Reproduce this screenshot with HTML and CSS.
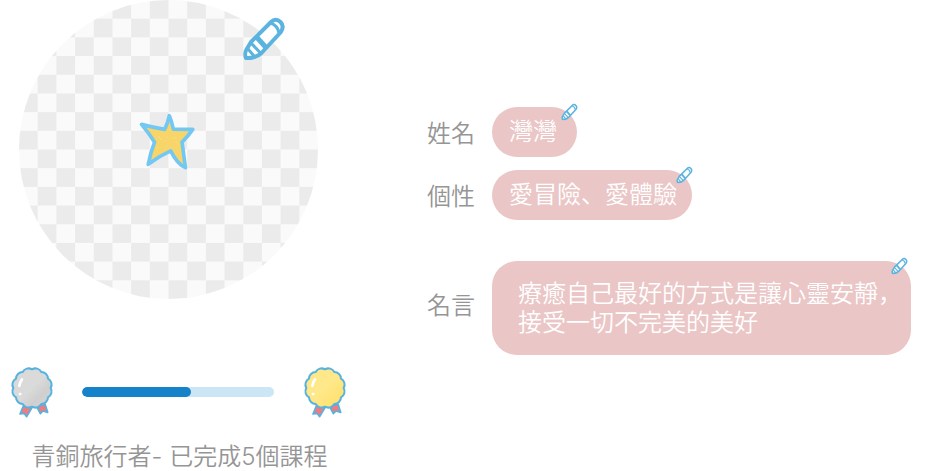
FILE: index.html
```html
<!DOCTYPE html>
<html lang="zh-Hant">
<head>
<meta charset="utf-8">
<title>青銅旅行者</title>
<meta name="viewport" content="width=device-width, initial-scale=1">
<link rel="stylesheet" href="styles.css">
</head>
<body>
<svg class="sprite" aria-hidden="true">
  <defs>
    <linearGradient id="silver" x1="0" y1="0" x2="1" y2="1"><stop offset="0.5" stop-color="#dadada"/><stop offset="0.7" stop-color="#cfcfcf"/><stop offset="1" stop-color="#d4d4d4"/></linearGradient>
    <linearGradient id="gold" x1="0" y1="0" x2="1" y2="1"><stop offset="0.5" stop-color="#ffe88a"/><stop offset="0.8" stop-color="#ffe272"/></linearGradient>
  </defs>
  <symbol id="pencil" viewBox="0 0 44 46">
    <path class="pencil-body" d="M4 42 C3 40 3 36 4.500 33.500 L9 26 L29 6 C32 3 35.500 3 38.500 6 C41.500 9 41 13 38.500 16.500 L19.500 37 C16 40.500 9 42.500 4 42Z"/>
    <path class="pencil-line" d="M28.500 7 C33 8.500 36 11.500 37 17 M9 27 L18.500 37 M6 33 L12 40"/>
    <path class="pencil-band" d="M15 21.500 L24 31.500"/>
  </symbol>
  <symbol id="flower" viewBox="27 18 135 156">
    <path class="ribbon" d="M70 138 L60 162 L72 160 L80 170 L98 140Z M110 140 L121 161 L129 153 L143 157 L135 132Z"/>
    <path class="petals" d="M152 84 A20 20 0 0 1 144 112 A20 20 0 0 1 124 132 A20 20 0 0 1 96 140 A20 20 0 0 1 68 132 A20 20 0 0 1 48 112 A20 20 0 0 1 40 84 A20 20 0 0 1 48 56 A20 20 0 0 1 68 36 A20 20 0 0 1 96 28 A20 20 0 0 1 124 36 A20 20 0 0 1 144 56 A20 20 0 0 1 152 84Z"/>
    <path class="shine" d="M66 58 Q60 66 58 78 M60 102 L61 102"/>
  </symbol>
</svg>

<main class="profile">
  <section class="traveler">
    <div class="avatar">
      <svg class="star" viewBox="25 22 172 176" role="img" aria-label="星星">
        <path class="star-shape" d="M118 33 Q125 50 130 73 L188 74 Q174 94 156 112 L166 188 Q142 178 122 138 Q88 153 55 178 Q62 142 74 112 Q56 84 35 59 Q68 68 104 74 Q113 56 118 33Z"/>
        <path class="star-fleck" d="M86 94 L89 100 M91 105 L96 102 M101 109 L105 105 M110 96 L113 99 M131 100 L136 98 M80 130 L84 128 M108 125 L110 122 M140 113 L142 116"/>
      </svg>
      <button class="edit edit-avatar" type="button" aria-label="編輯頭像"><svg><use href="#pencil"/></svg></button>
    </div>
    <div class="level">
      <svg class="badge badge-silver" aria-hidden="true"><use href="#flower"/></svg>
      <progress class="bar" value="57" max="100" aria-label="課程進度"></progress>
      <svg class="badge badge-gold" aria-hidden="true"><use href="#flower"/></svg>
    </div>
    <p class="rank">青銅旅行者- 已完成5個課程</p>
  </section>

  <dl class="details">
    <div class="row">
      <dt>姓名</dt>
      <dd class="chip">灣灣<button class="edit" type="button" aria-label="編輯姓名"><svg><use href="#pencil"/></svg></button></dd>
    </div>
    <div class="row">
      <dt>個性</dt>
      <dd class="chip">愛冒險、愛體驗<button class="edit" type="button" aria-label="編輯個性"><svg><use href="#pencil"/></svg></button></dd>
    </div>
    <div class="row row-quote">
      <dt>名言</dt>
      <dd class="chip quote">療癒自己最好的方式是讓心靈安靜，<br>接受一切不完美的美好<button class="edit" type="button" aria-label="編輯名言"><svg><use href="#pencil"/></svg></button></dd>
    </div>
  </dl>
</main>
</body>
</html>
```
FILE: styles.css
```css
* {
  box-sizing: border-box;
}

body {
  margin: 0;
  background: #fff;
  color: #959595;
  font-family: Inter, "Noto Sans CJK JP", sans-serif;
  font-feature-settings: "locl" 0;
  font-size: 24px;
  font-weight: 350;
  line-height: 29px;
}

.sprite {
  position: absolute;
  width: 0;
  height: 0;
}

.profile {
  display: grid;
  grid-template-columns: 338px 1fr;
  column-gap: 80px;
  padding: 0 30px 0 9px;
}

.avatar {
  position: relative;
  display: flex;
  align-items: center;
  justify-content: center;
  width: 299px;
  aspect-ratio: 1;
  margin-left: 10px;
  padding: 0 4px 16px 0;
  border-radius: 50%;
  background: conic-gradient(#ebebeb 25%, #fafafa 0 50%, #ebebeb 0 75%, #fafafa 0) 0 0 / 12.5% 12.5%;
}

.star {
  width: 58px;
  height: 59px;
}

.star-shape {
  fill: #f7d568;
  stroke: #72c8f2;
  stroke-width: 11;
  stroke-linejoin: round;
}

.star-fleck {
  fill: none;
  stroke: #fbe7a6;
  stroke-width: 2;
}

.edit {
  position: absolute;
  top: -4px;
  right: -1px;
  width: 17px;
  height: 18px;
  padding: 0;
  border: 0;
  background: none;
  cursor: pointer;
}

.edit svg {
  display: block;
  width: 100%;
  height: 100%;
}

.edit-avatar {
  top: 16px;
  right: 32px;
  width: 44px;
  height: 46px;
}

.pencil-body {
  fill: #fff;
  stroke: #5bb3df;
  stroke-width: 4;
  stroke-linejoin: round;
}

.pencil-line {
  fill: none;
  stroke: #5bb3df;
  stroke-width: 3;
}

.pencil-band {
  stroke: #5bb3df;
  stroke-width: 5;
}

.level {
  display: flex;
  align-items: center;
  gap: 28px;
  margin-top: 67px;
}

.badge {
  flex: none;
  width: 45px;
  height: 52px;
}

.badge-silver {
  fill: url(#silver);
}

.badge-gold {
  fill: url(#gold);
}

.petals {
  stroke: #56b2df;
  stroke-width: 6;
  stroke-linejoin: round;
}

.ribbon {
  fill: #f07b80;
  stroke: #56b2df;
  stroke-width: 5;
  stroke-linejoin: round;
}

.shine {
  fill: none;
  stroke: #fff;
  stroke-width: 8;
  stroke-linecap: round;
}

.bar {
  flex: 1;
  min-width: 0;
  height: 10px;
  border: 0;
  border-radius: 5px;
  overflow: hidden;
  appearance: none;
  background: #cbe6f4;
}

.bar::-webkit-progress-bar {
  background: #cbe6f4;
}

.bar::-webkit-progress-value {
  border-radius: 5px;
  background: #1682ca;
}

.rank {
  margin: 24px 0 0;
  padding-left: 3px;
  text-align: center;
  white-space: nowrap;
}

.details {
  display: flex;
  flex-direction: column;
  gap: 13px;
  margin: 0;
  padding-top: 107px;
}

.row {
  display: grid;
  grid-template-columns: 48px 1fr;
  column-gap: 17px;
  align-items: center;
}

.row dt {
  padding-top: 3px;
}

.row-quote {
  margin-top: 28px;
}

.row-quote dt {
  padding: 0 0 6px;
}

.chip {
  position: relative;
  justify-self: start;
  min-width: 85px;
  margin: 0;
  padding: 10px 15px 11px 17px;
  border-radius: 25px;
  background: #eac6c6;
  color: #fff;
}

.quote {
  justify-self: stretch;
  padding: 18px 8px 18px 26px;
}

.quote .edit {
  right: 3px;
}
```
